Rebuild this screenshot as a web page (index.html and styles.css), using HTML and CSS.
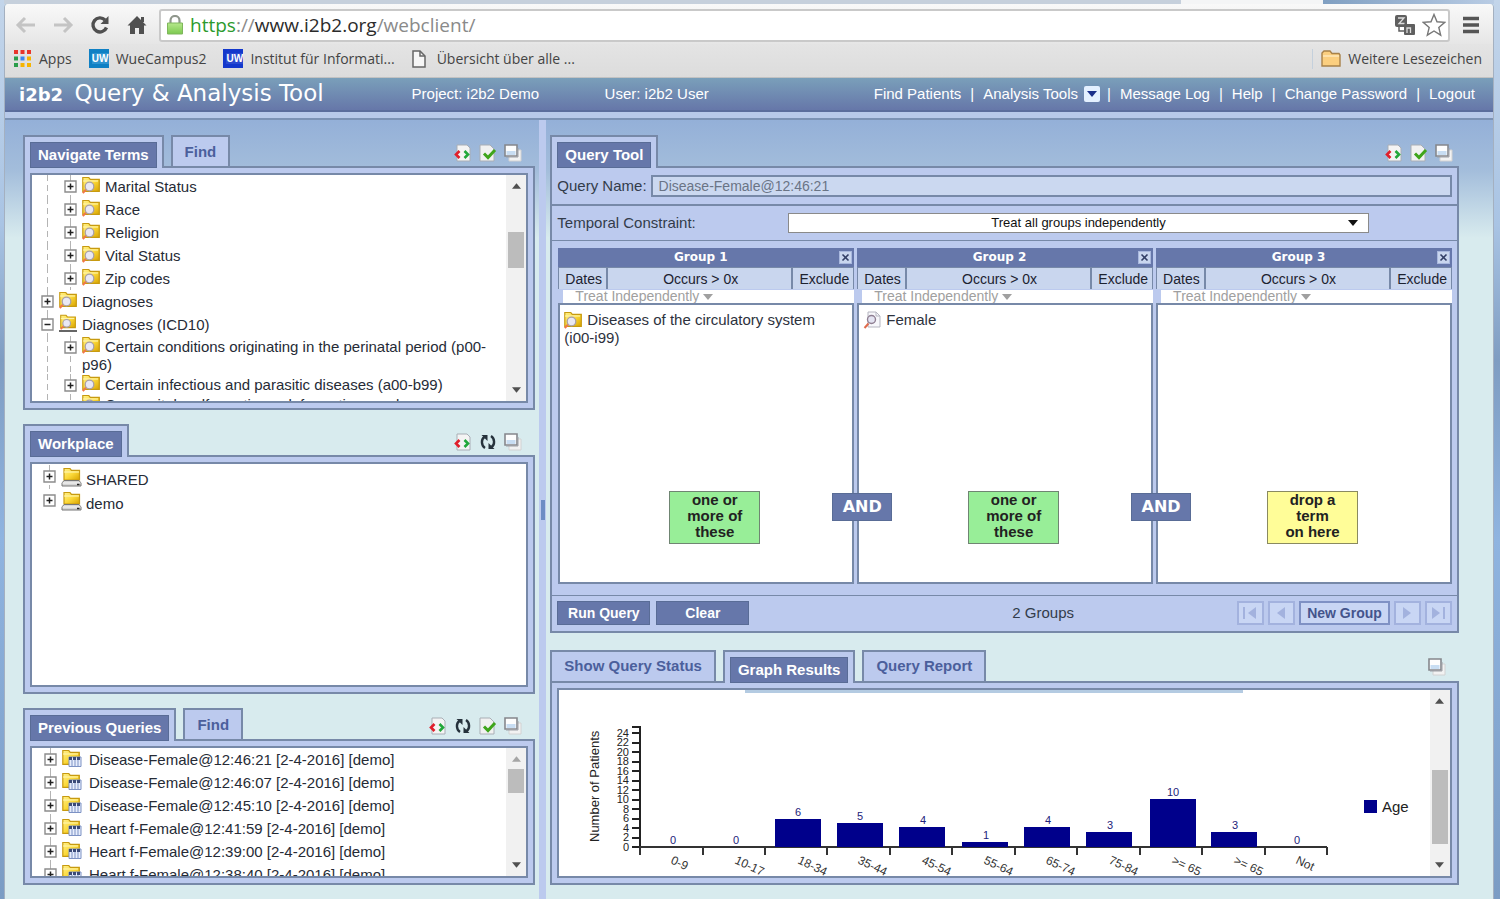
FILE: index.html
```html
<!doctype html>
<html lang="en">
<head>
	<meta charset="UTF-8">
	<meta name="viewport" content="width=device-width, initial-scale=1">
	<title>i2b2 Query &amp; Analysis Tool</title>
	<link rel="stylesheet" href="styles.css">
</head>
<body>

	<!-- shared icons -->
	<svg class="defs" width="0" height="0" aria-hidden="true">
		<defs>
			<linearGradient id="gold" x1="0" y1="0" x2="1" y2="1">
				<stop offset="0" stop-color="#fff08a"/>
				<stop offset="0.5" stop-color="#fbd93a"/>
				<stop offset="1" stop-color="#d9a400"/>
			</linearGradient>
			<linearGradient id="lockfill" x1="0" y1="0" x2="0" y2="1">
				<stop offset="0" stop-color="#b6e88c"/>
				<stop offset="1" stop-color="#7cc94f"/>
			</linearGradient>
		</defs>
		<symbol id="plus" viewBox="0 0 13 13">
			<path d="M1 1h11v11H1z" fill="#fff" stroke="#8c8c8c" stroke-width="1.4"/>
			<path d="M3.5 6.5h6M6.5 3.5v6" stroke="#222" stroke-width="1.5"/>
		</symbol>
		<symbol id="minus" viewBox="0 0 13 13">
			<path d="M1 1h11v11H1z" fill="#fff" stroke="#8c8c8c" stroke-width="1.4"/>
			<path d="M3.5 6.5h6" stroke="#222" stroke-width="1.5"/>
		</symbol>
		<symbol id="folder" viewBox="0 0 18 18">
			<path d="M.8 1.5h6l1.5 1.8h9v12H.8z" fill="url(#gold)" stroke="#c79a10" stroke-width="1.2"/>
			<path d="M1 5h15" stroke="#fff7b8"/>
			<path d="M4 13.5L.8 17.2" stroke="#f0784a" stroke-width="2"/>
			<circle cx="7.5" cy="10.5" r="4.3" fill="#e9e8f4" stroke="#a9a0a8" stroke-width="1.3"/>
		</symbol>
		<symbol id="query" viewBox="0 0 20 18">
			<path d="M.8 1.5h6l1.5 1.8h9v12H.8z" fill="url(#gold)" stroke="#c79a10" stroke-width="1.2"/>
			<path d="M1 5h15" stroke="#fff7b8"/>
			<path d="M7 8h12v9.5H7z" fill="#e8eefc" stroke="#7d92c4"/>
			<path d="M7 9.5h12" stroke="#3a4a78" stroke-width="3" stroke-dasharray="3 1"/>
			<path d="M10 11v6M13 11v6M16 11v6" stroke="#7d92c4"/>
		</symbol>
		<symbol id="drive" viewBox="0 0 21 20">
			<path d="M3 1.5h6l1.500 1.800h8V13H3z" fill="url(#gold)" stroke="#c79a10" stroke-width="1.2"/>
			<path d="M3 5h15" stroke="#fff7b8"/>
			<path d="M3 13.5h15l2 2.5v3H1v-3z" fill="#d5d5d5" stroke="#777"/>
			<path d="M1.5 16h18" stroke="#fafafa"/>
			<path d="M16 17.5h2.5" stroke="#222" stroke-width="1.5"/>
		</symbol>
		<symbol id="sheet" viewBox="0 0 18 18">
			<path d="M5 1h8l4 4v11H5z" fill="#f7f7fb" stroke="#b5b5c0"/>
			<path d="M13 1v4h4" fill="none" stroke="#b5b5c0"/>
			<path d="M5.5 12.5L1.5 17" stroke="#e06b4c" stroke-width="2"/>
			<circle cx="8.5" cy="8.5" r="4" fill="#e4e4f2" stroke="#8f7f92" stroke-width="1.4"/>
		</symbol>
		<symbol id="xml" viewBox="0 0 18 18">
			<path d="M3 1h10l3 3v13H3z" fill="#f4f4f4" stroke="#a9aeb5"/>
			<path d="M5.500 7L2 10.500 5.500 14" fill="none" stroke="#e01f2b" stroke-width="2.6"/>
			<path d="M10.500 7L14 10.500l-3.500 3.500" fill="none" stroke="#22a83a" stroke-width="2.6"/>
		</symbol>
		<symbol id="check" viewBox="0 0 18 18">
			<path d="M1 1h10l4 4v12H1z" fill="#f1f1f1" stroke="#a9aeb5"/>
			<path d="M5 9.500l4 4 7-7.500" fill="none" stroke="#3fa51b" stroke-width="3"/>
		</symbol>
		<symbol id="windows" viewBox="0 0 18 18">
			<path d="M5 6h12v11H5z" fill="#f2f2f2" stroke="#d2d2d2"/>
			<path d="M1 1h12v11H1z" fill="#fdfdfd" stroke="#85878c" stroke-width="1.6"/>
			<path d="M2.5 7h9v4h-9z" fill="#c8ddf2"/>
			<path d="M2 13h12V4" fill="none" stroke="#9d9fa5"/>
		</symbol>
		<symbol id="refresh" viewBox="0 0 18 18">
			<path d="M6 15C2 12.500 2 6 5.500 4" fill="none" stroke="#26323c" stroke-width="2.4"/>
			<path d="M2.500 2H8.500v6z" fill="#26323c"/>
			<path d="M12 3c4 2.500 4 9 .5 11" fill="none" stroke="#26323c" stroke-width="2.4"/>
			<path d="M15.500 16h-6v-6z" fill="#26323c"/>
		</symbol>
		<symbol id="up" viewBox="0 0 10 6"><path d="M0 6h10L5 0z" fill="currentColor"/></symbol>
		<symbol id="down" viewBox="0 0 10 6"><path d="M0 0h10L5 6z" fill="currentColor"/></symbol>
	</svg>

	<!-- browser window -->
	<div class="tabstrip"><div class="opentab"></div></div>
	<div class="window">

		<div class="toolbar">
			<button class="tool off" aria-label="Back"><svg width="22" height="20" viewBox="0 0 22 20"><path d="M20 10H3M10 3l-7 7 7 7" fill="none" stroke="#c4c4c4" stroke-width="3"/></svg></button>
			<button class="tool off" aria-label="Forward"><svg width="22" height="20" viewBox="0 0 22 20"><path d="M2 10h17M12 3l7 7-7 7" fill="none" stroke="#c4c4c4" stroke-width="3"/></svg></button>
			<button class="tool" aria-label="Reload"><svg width="22" height="20" viewBox="0 0 22 20"><path d="M17.5 12.5A7 7 0 1 1 16 5" fill="none" stroke="#505050" stroke-width="3.4"/><path d="M19.5 1v8h-8z" fill="#505050"/></svg></button>
			<button class="tool" aria-label="Home"><svg width="22" height="20" viewBox="0 0 22 20"><path d="M11 1l9.500 9.500H18V19h-5v-6H9v6H4v-8.500H1.500z" fill="#505050"/><path d="M15 2h3v5h-3z" fill="#505050"/></svg></button>
			<div class="address">
				<svg width="16" height="20" viewBox="0 0 16 20"><path d="M3.5 9V5.500a4.500 4.500 0 0 1 9 0V9" fill="none" stroke="#8f968c" stroke-width="2.2"/><path d="M.5 8h15v11H.5z" fill="url(#lockfill)" stroke="#7fb65c"/></svg>
				<span class="url"><i class="scheme">https</i><i class="dim">://</i>www.i2b2.org<i class="dim">/webclient/</i></span>
				<svg class="translate" width="20" height="20" viewBox="0 0 20 20"><rect width="12" height="12" rx="2" fill="#5f5f5f"/><path d="M3 3h6L4 8.500h5.500" fill="none" stroke="#ddd" stroke-width="1.3"/><path d="M4 12v4h5" fill="none" stroke="#5f5f5f" stroke-width="1.5"/><rect x="9" y="9" width="11" height="11" rx="1" fill="#5f5f5f"/><path d="M12 18v-5h3.500v5" fill="none" stroke="#ddd" stroke-width="1.3"/></svg>
				<svg width="24" height="24" viewBox="0 0 24 24"><path d="M12 1.500l3 7.300 7.800.6-6 5 1.900 7.800-6.700-4.200-6.700 4.200 1.900-7.800-6-5 7.800-.6z" fill="#fff" stroke="#777" stroke-width="1.4"/></svg>
			</div>
			<button class="tool" aria-label="Menu"><svg width="16" height="18" viewBox="0 0 16 18"><path d="M0 2.500h16M0 9h16M0 15.500h16" stroke="#555" stroke-width="3.4"/></svg></button>
		</div>

		<div class="bookmarks">
			<a href="#"><svg width="18" height="18" viewBox="0 0 18 18"><path d="M0 2h17" stroke="#e8352b" stroke-width="4" stroke-dasharray="4 2.5"/><path d="M0 8.500h4" stroke="#2a9d4a" stroke-width="4"/><path d="M6.500 8.500h4" stroke="#3a86f0" stroke-width="4"/><path d="M13 8.500h4" stroke="#f6b400" stroke-width="4"/><path d="M0 15h4" stroke="#2a9d4a" stroke-width="4"/><path d="M6.500 15H17" stroke="#f6b400" stroke-width="4" stroke-dasharray="4 2.5"/></svg><span>Apps</span></a>
			<a href="#"><span class="uni">UW</span><span>WueCampus2</span></a>
			<a href="#"><span class="uni dark">UW</span><span>Institut für Informati...</span></a>
			<a href="#"><svg width="14" height="18" viewBox="0 0 14 18"><path d="M1 1h7l5 5v11H1z" fill="#f6f6f6" stroke="#666" stroke-width="1.5"/><path d="M8 1v5h5" fill="none" stroke="#666" stroke-width="1.5"/></svg><span class="wide">Übersicht über alle ...</span></a>
			<a href="#" class="more"><svg width="20" height="18" viewBox="0 0 20 18"><path d="M1 16V3l2-2h6l2 2.500h7l1 1.500v11z" fill="#fbcf7f" stroke="#a8824a" stroke-width="1.4"/><path d="M2 6h16" stroke="#ffe8ba" stroke-width="1.5"/></svg><span>Weitere Lesezeichen</span></a>
		</div>

		<!-- application header -->
		<header class="topbar">
			<h1><b>i2b2</b> Query &amp; Analysis Tool</h1>
			<span class="project">Project: i2b2 Demo</span>
			<span class="user">User: i2b2 User</span>
			<nav>
				<a href="#">Find Patients</a><i>|</i>
				<a href="#">Analysis Tools</a><button class="drop" aria-label="Open analysis tools"><svg width="10" height="6"><use href="#down"/></svg></button><i>|</i>
				<a href="#">Message Log</a><i>|</i>
				<a href="#">Help</a><i>|</i>
				<a href="#">Change Password</a><i>|</i>
				<a href="#">Logout</a>
			</nav>
		</header>
		<div class="stripe"></div>

		<main>
			<!-- left side -->
			<div class="column">

				<section class="panel terms">
					<div class="tabs">
						<button class="tab active"><span>Navigate Terms</span></button>
						<button class="tab"><span>Find</span></button>
						<div class="icons">
							<svg><use href="#xml"/></svg><svg><use href="#check"/></svg><svg><use href="#windows"/></svg>
						</div>
					</div>
					<div class="frame">
						<div class="box">
							<ul class="tree">
								<li><i class="cell line"></i><i class="cell line"><svg><use href="#plus"/></svg></i><span><svg><use href="#folder"/></svg>Marital Status</span></li>
								<li><i class="cell line"></i><i class="cell line"><svg><use href="#plus"/></svg></i><span><svg><use href="#folder"/></svg>Race</span></li>
								<li><i class="cell line"></i><i class="cell line"><svg><use href="#plus"/></svg></i><span><svg><use href="#folder"/></svg>Religion</span></li>
								<li><i class="cell line"></i><i class="cell line"><svg><use href="#plus"/></svg></i><span><svg><use href="#folder"/></svg>Vital Status</span></li>
								<li><i class="cell line"></i><i class="cell line"><svg><use href="#plus"/></svg></i><span><svg><use href="#folder"/></svg>Zip codes</span></li>
								<li><i class="cell line"><svg><use href="#plus"/></svg></i><span><svg><use href="#folder"/></svg>Diagnoses</span></li>
								<li><i class="cell line"><svg><use href="#minus"/></svg></i><span><svg class="open"><use href="#folder"/></svg>Diagnoses (ICD10)</span></li>
								<li class="long"><i class="cell line"></i><i class="cell line"><svg><use href="#plus"/></svg></i><span><svg><use href="#folder"/></svg>Certain conditions originating in the perinatal period (p00-p96)</span></li>
								<li class="long"><i class="cell line"></i><i class="cell line"><svg><use href="#plus"/></svg></i><span><svg><use href="#folder"/></svg>Certain infectious and parasitic diseases (a00-b99)</span></li>
								<li class="long"><i class="cell line"></i><i class="cell line"></i><span><svg><use href="#folder"/></svg>Congenital malformations, deformations and</span></li>
							</ul>
							<div class="scroll"><svg><use href="#up"/></svg><i class="thumb"></i><svg><use href="#down"/></svg></div>
						</div>
					</div>
				</section>

				<section class="panel work">
					<div class="tabs">
						<button class="tab active"><span>Workplace</span></button>
						<div class="icons">
							<svg><use href="#xml"/></svg><svg><use href="#refresh"/></svg><svg><use href="#windows"/></svg>
						</div>
					</div>
					<div class="frame">
						<div class="box">
							<ul class="tree">
								<li><i class="cell line"><svg><use href="#plus"/></svg></i><span><svg><use href="#drive"/></svg>SHARED</span></li>
								<li><i class="cell"><svg><use href="#plus"/></svg></i><span><svg><use href="#drive"/></svg>demo</span></li>
							</ul>
						</div>
					</div>
				</section>

				<section class="panel previous">
					<div class="tabs">
						<button class="tab active"><span>Previous Queries</span></button>
						<button class="tab"><span>Find</span></button>
						<div class="icons">
							<svg><use href="#xml"/></svg><svg><use href="#refresh"/></svg><svg><use href="#check"/></svg><svg><use href="#windows"/></svg>
						</div>
					</div>
					<div class="frame">
						<div class="box">
							<ul class="tree">
								<li><i class="cell line"><svg><use href="#plus"/></svg></i><span><svg><use href="#query"/></svg>Disease-Female@12:46:21 [2-4-2016] [demo]</span></li>
								<li><i class="cell line"><svg><use href="#plus"/></svg></i><span><svg><use href="#query"/></svg>Disease-Female@12:46:07 [2-4-2016] [demo]</span></li>
								<li><i class="cell line"><svg><use href="#plus"/></svg></i><span><svg><use href="#query"/></svg>Disease-Female@12:45:10 [2-4-2016] [demo]</span></li>
								<li><i class="cell line"><svg><use href="#plus"/></svg></i><span><svg><use href="#query"/></svg>Heart f-Female@12:41:59 [2-4-2016] [demo]</span></li>
								<li><i class="cell line"><svg><use href="#plus"/></svg></i><span><svg><use href="#query"/></svg>Heart f-Female@12:39:00 [2-4-2016] [demo]</span></li>
								<li><i class="cell line"><svg><use href="#plus"/></svg></i><span><svg><use href="#query"/></svg>Heart f-Female@12:38:40 [2-4-2016] [demo]</span></li>
							</ul>
							<div class="scroll top"><svg><use href="#up"/></svg><i class="thumb"></i><svg><use href="#down"/></svg></div>
						</div>
					</div>
				</section>
			</div>

			<div class="splitter"><i></i></div>

			<!-- right side -->
			<div class="column right">

				<section class="panel tool-panel">
					<div class="tabs">
						<button class="tab active"><span>Query Tool</span></button>
						<div class="icons">
							<svg><use href="#xml"/></svg><svg><use href="#check"/></svg><svg><use href="#windows"/></svg>
						</div>
					</div>
					<div class="frame">
						<div class="row name">
							<label for="qname">Query Name:</label>
							<input id="qname" type="text" value="Disease-Female@12:46:21">
						</div>
						<div class="row temporal">
							<label for="timing">Temporal Constraint:</label>
							<div class="pick">
								<select id="timing"><option>Treat all groups independently</option></select>
								<svg width="10" height="6"><use href="#down"/></svg>
							</div>
						</div>
						<div class="groups">
							<div class="group">
								<div class="title">Group 1<button aria-label="Close group 1"><svg width="11" height="11" viewBox="0 0 11 11"><path d="M2.5 2.5l6 6M8.500 2.500l-6 6" stroke="#333f66" stroke-width="1.6"/></svg></button></div>
								<div class="options"><button>Dates</button><button class="occurs">Occurs &gt; 0x</button><button>Exclude</button></div>
								<div class="treat">Treat Independently <svg width="10" height="6"><use href="#down"/></svg></div>
								<div class="content">
									<p><svg><use href="#folder"/></svg>Diseases of the circulatory system (i00-i99)</p>
									<div class="hint">one or<br>more of<br>these</div>
								</div>
								<span class="and">AND</span>
							</div>
							<div class="group">
								<div class="title">Group 2<button aria-label="Close group 2"><svg width="11" height="11" viewBox="0 0 11 11"><path d="M2.5 2.5l6 6M8.500 2.500l-6 6" stroke="#333f66" stroke-width="1.6"/></svg></button></div>
								<div class="options"><button>Dates</button><button class="occurs">Occurs &gt; 0x</button><button>Exclude</button></div>
								<div class="treat">Treat Independently <svg width="10" height="6"><use href="#down"/></svg></div>
								<div class="content">
									<p><svg><use href="#sheet"/></svg>Female</p>
									<div class="hint">one or<br>more of<br>these</div>
								</div>
								<span class="and">AND</span>
							</div>
							<div class="group">
								<div class="title">Group 3<button aria-label="Close group 3"><svg width="11" height="11" viewBox="0 0 11 11"><path d="M2.5 2.5l6 6M8.500 2.500l-6 6" stroke="#333f66" stroke-width="1.6"/></svg></button></div>
								<div class="options"><button>Dates</button><button class="occurs">Occurs &gt; 0x</button><button>Exclude</button></div>
								<div class="treat">Treat Independently <svg width="10" height="6"><use href="#down"/></svg></div>
								<div class="content">
									<div class="hint empty">drop a<br>term<br>on here</div>
								</div>
							</div>
						</div>
						<div class="row actions">
							<button class="main">Run Query</button>
							<button class="main">Clear</button>
							<span class="count">2 Groups</span>
							<button class="step" aria-label="First"><svg width="16" height="14" viewBox="0 0 16 14"><path d="M2 1v12" stroke="#a3b2de" stroke-width="2"/><path d="M14 1v12L6 7z" fill="#a3b2de"/></svg></button>
							<button class="step" aria-label="Previous"><svg width="16" height="14" viewBox="0 0 16 14"><path d="M12 1v12L4 7z" fill="#a3b2de"/></svg></button>
							<button class="step new">New Group</button>
							<button class="step" aria-label="Next"><svg width="16" height="14" viewBox="0 0 16 14"><path d="M4 1v12l8-6z" fill="#a3b2de"/></svg></button>
							<button class="step" aria-label="Last"><svg width="16" height="14" viewBox="0 0 16 14"><path d="M14 1v12" stroke="#a3b2de" stroke-width="2"/><path d="M2 1v12l8-6z" fill="#a3b2de"/></svg></button>
						</div>
					</div>
				</section>

				<section class="panel results">
					<div class="tabs">
						<button class="tab"><span>Show Query Status</span></button>
						<button class="tab active"><span>Graph Results</span></button>
						<button class="tab"><span>Query Report</span></button>
						<div class="icons"><svg><use href="#windows"/></svg></div>
					</div>
					<div class="frame">
						<div class="box">
							<div class="chart">
								<!-- patients per age group -->
								<svg width="860" height="186" viewBox="0 0 860 186">
									<path d="M186 0h498v3H186z" fill="#b4cbe2"/>
									<text class="axis" transform="translate(40 152) rotate(-90)">Number of Patients</text>
									<g class="ticks" text-anchor="end">
										<text x="70" y="161">0</text><text x="70" y="151">2</text><text x="70" y="142">4</text><text x="70" y="132">6</text><text x="70" y="123">8</text><text x="70" y="113">10</text><text x="70" y="104">12</text><text x="70" y="94">14</text><text x="70" y="85">16</text><text x="70" y="75">18</text><text x="70" y="66">20</text><text x="70" y="56">22</text><text x="70" y="47">24</text>
									</g>
									<path d="M73 37h8v120M73 43h8M73 53h8M73 62h8M73 72h8M73 81h8M73 91h8M73 100h8M73 110h8M73 119h8M73 129h8M73 138h8M73 148h8M73 157h8" fill="none" stroke="#222" stroke-width="2"/>
									<path d="M80 157h688" stroke="#333" stroke-width="2"/>
									<path d="M81 157v8M144 157v8M206 157v8M268 157v8M331 157v8M393 157v8M456 157v8M518 157v8M581 157v8M643 157v8M706 157v8M768 157v8" stroke="#333" stroke-width="2"/>
									<path d="M216 129h46v28h-46zM278 133h46v24h-46zM340 137h46v20h-46zM403 152h46v5h-46zM465 137h46v20h-46zM527 142h46v15h-46zM591 109h46v48h-46zM652 142h46v15h-46z" fill="#00008b"/>
									<g class="values" text-anchor="middle">
										<text x="114" y="154">0</text><text x="177" y="154">0</text><text x="239" y="126">6</text><text x="301" y="130">5</text><text x="364" y="134">4</text><text x="427" y="149">1</text><text x="489" y="134">4</text><text x="551" y="139">3</text><text x="614" y="106">10</text><text x="676" y="139">3</text><text x="738" y="154">0</text>
									</g>
									<g class="ages">
										<text transform="translate(111 173) rotate(25)">0-9</text><text transform="translate(175 173) rotate(25)">10-17</text><text transform="translate(238 173) rotate(25)">18-34</text><text transform="translate(298 173) rotate(25)">35-44</text><text transform="translate(362 173) rotate(25)">45-54</text><text transform="translate(424 173) rotate(25)">55-64</text><text transform="translate(486 173) rotate(25)">65-74</text><text transform="translate(549 173) rotate(25)">75-84</text><text transform="translate(612 173) rotate(25)">&gt;= 65</text><text transform="translate(674 173) rotate(25)">&gt;= 65</text><text transform="translate(736 173) rotate(25)">Not</text>
									</g>
									<path d="M805 110h13v13h-13z" fill="#00008b"/>
									<text class="legend" x="823" y="122">Age</text>
								</svg>
							</div>
							<div class="scroll low"><svg><use href="#up"/></svg><i class="thumb"></i><svg><use href="#down"/></svg></div>
						</div>
					</div>
				</section>
			</div>
		</main>
	</div>

</body>
</html>
```
FILE: styles.css
```css
* {
	box-sizing: border-box;
}

body {
	display: flex;
	flex-direction: column;
	height: 100vh;
	margin: 0;
	padding: 0 6px 0 4px;
	overflow: hidden;
	background: linear-gradient(#c3d5ea, #a9c4e4 25%, #7f9dc2 40%, #8fb4e0 60%, #7b9cc4);
	color: #333c4a;
	font: 15px/18px "Liberation Sans", Arial, sans-serif;
}

button, input, select {
	margin: 0;
	padding: 0;
	border: 0;
	border-radius: 0;
	color: inherit;
	font: inherit;
}

a {
	color: inherit;
	text-decoration: none;
}

i {
	font-style: normal;
}

.defs {
	position: absolute;
}

svg {
	display: block;
	flex: none;
}

/* browser window */
.tabstrip {
	height: 4px;
	padding-left: 79%;
	background: linear-gradient(90deg, #c6d0dc 88%, #7d9dc0 88%, #b9cce4);
}

.opentab {
	width: 142px;
	height: 4px;
	background: #f4f5f6;
}

.window {
	display: flex;
	flex: 1;
	flex-direction: column;
	min-height: 0;
	border: solid #a4b0c0;
	border-width: 0 1px;
	border-radius: 4px 4px 0 0;
	background: #d8ebee;
	overflow: hidden;
}

.toolbar {
	display: flex;
	align-items: center;
	gap: 15px;
	height: 40px;
	padding: 2px 14px 0 10px;
	background: linear-gradient(#f9f9f9, #e6e6e6);
}

.tool {
	background: none;
}

.address {
	display: flex;
	flex: 1;
	align-items: center;
	gap: 7px;
	height: 33px;
	margin: 0 -2px 0 -4px;
	padding: 0 2px 0 6px;
	border: 2px solid #c9c9c9;
	border-radius: 3px;
	background: #fff;
}

.url {
	color: #2b2b2b;
	font: 19px/26px "Open Sans", sans-serif;
}

.url .scheme {
	color: #2c9a2c;
}

.url .dim {
	color: #8a8a8a;
}

.translate {
	margin-left: auto;
}

.bookmarks {
	display: flex;
	align-items: center;
	gap: 17px;
	height: 34px;
	padding: 0 11px 4px 9px;
	border-bottom: 1px solid #c2c2c2;
	background: linear-gradient(#e4e4e4, #dcdcdc);
	color: #444;
	font: 14px/20px "Open Sans", sans-serif;
}

.bookmarks a {
	display: flex;
	align-items: center;
	gap: 7px;
}

.bookmarks .more {
	margin-left: auto;
	padding-left: 8px;
	border-left: 1px solid #c4d0dc;
}

.bookmarks .wide {
	padding-left: 4px;
}

.uni {
	width: 20px;
	height: 19px;
	border: solid #0f80c4;
	border-width: 4px 0 4px 3px;
	background: #2e93d0;
	color: #fff;
	font: bold 10px/11px "Liberation Sans", sans-serif;
	text-align: center;
}

.uni.dark {
	border-color: #1338cc;
	background: #2a4ad0;
}

/* application header */
.topbar {
	display: flex;
	flex: none;
	align-items: center;
	height: 34px;
	padding: 0 18px 0 14px;
	border-bottom: 2px solid #5a6d9c;
	background: linear-gradient(#7a9fba, #6677a9);
	color: #fff;
}

.topbar h1 {
	width: 26%;
	margin: 0;
	font: 23px/28px "DejaVu Sans", Verdana, sans-serif;
	white-space: nowrap;
}

.topbar h1 b {
	margin-right: 4px;
	font-size: 18px;
}

.project {
	width: 193px;
	margin-left: 14px;
}

.topbar nav {
	display: flex;
	align-items: center;
	gap: 9px;
	margin-left: auto;
}

.drop {
	display: flex;
	align-items: center;
	justify-content: center;
	width: 16px;
	height: 16px;
	margin: 0 -2px 0 -3px;
	border-radius: 2px;
	background: #e4f0ff;
	color: #1a2f8a;
}

.stripe {
	flex: none;
	height: 8px;
	border-bottom: 2px solid #7b92b4;
	background: #b7c9e9;
}

main {
	display: grid;
	flex: 1;
	grid-template-columns: 512fr 7px 908fr;
	grid-template-rows: minmax(0, 1fr);
	column-gap: 4px;
	min-height: 0;
	padding: 0 34px 0 18px;
	background: linear-gradient(#94b0d8, #a3bddb 50px, #d8ebee 118px);
}

.column {
	display: flex;
	flex-direction: column;
	gap: 14px;
	min-width: 0;
	padding: 15px 0 14px;
}

.column.right {
	gap: 17px;
}

.splitter {
	display: flex;
	align-items: center;
	background: #bccaee;
}

.splitter i {
	width: 4px;
	height: 20px;
	margin-left: 2px;
	background: #6d8dc4;
}

/* panels */
.panel {
	display: flex;
	flex-direction: column;
	min-height: 0;
}

.terms { flex: 275 1 0; }
.work { flex: 270 1 0; }
.previous { flex: 177 1 0; }
.tool-panel { flex: 497 1 0; }
.results { flex: 235 1 0; }

.tabs {
	display: flex;
	flex: none;
	gap: 7px;
	height: 31px;
}

.tab {
	height: 31px;
	padding: 0 12px;
	border: solid #7789a8;
	border-width: 2px 2px 0;
	background: #bccaee;
	color: #4b5f9c;
	font-weight: bold;
}

.tab.active {
	position: relative;
	height: 33px;
	padding: 5px 5px 0;
	color: #fff;
}

.tab.active span {
	display: block;
	height: 26px;
	padding: 0 7px;
	border: 1px solid #596c96;
	background: #6677aa;
	line-height: 24px;
}

.icons {
	display: flex;
	align-items: center;
	gap: 7px;
	margin-left: auto;
	padding: 4px 13px 0 0;
}

.tool-panel .icons {
	padding-right: 6px;
}

.icons svg {
	width: 18px;
	height: 18px;
}

.frame {
	display: flex;
	flex: 1;
	flex-direction: column;
	min-height: 0;
	padding: 5px;
	border: 2px solid #7789a8;
	background: #bccaee;
}

.box {
	display: flex;
	flex: 1;
	min-height: 0;
	border: 2px solid #7789a8;
	background: #fff;
	overflow: hidden;
}

/* tree */
.tree {
	flex: 1;
	margin: 0;
	padding: 0 0 0 4px;
	color: #262b36;
	list-style: none;
}

.tree li {
	display: flex;
}

.tree li > span {
	padding: 3px 0 2px;
}

.tree span svg {
	display: inline-block;
	width: 18px;
	height: 18px;
	margin: -2px 5px 0 0;
	vertical-align: top;
}

.tree .open {
	border-bottom: 2px solid #666;
}

.tree .long > span {
	padding: 2px 0 0;
}

.cell {
	display: flex;
	flex: none;
	justify-content: center;
	width: 23px;
	padding-top: 5px;
}

.cell.line {
	background: repeating-linear-gradient(#b4b4b4 0 6px, transparent 6px 10px) center / 1px 100% no-repeat;
}

.cell svg {
	width: 13px;
	height: 13px;
}

.work .tree {
	padding: 1px 0 0 6px;
}

.work .tree li > span {
	padding: 6px 0 0;
}

.work .tree span svg {
	width: 21px;
	height: 20px;
	margin: -4px 4px 0 0;
}

.previous .tree {
	padding-left: 7px;
}

.previous .tree span svg {
	width: 20px;
	margin-right: 7px;
}

/* scroll bars */
.scroll {
	display: flex;
	flex: none;
	flex-direction: column;
	align-items: center;
	width: 20px;
	padding: 8px 0;
	background: #f1f1f1;
	color: #505050;
}

.scroll svg {
	width: 9px;
	height: 6px;
}

.thumb {
	width: 16px;
	height: 36px;
	margin: 43px 0 auto;
	background: #bcbcbc;
}

.scroll.top .thumb {
	height: 24px;
	margin-top: 7px;
}

.scroll.top svg:first-child {
	color: #a5a5a5;
}

.scroll.low .thumb {
	height: 74px;
	margin-top: auto;
	margin-bottom: 18px;
}

/* query tool */
.tool-panel .frame {
	padding: 0;
}

.row {
	display: flex;
	flex: none;
	align-items: center;
	padding: 0 5px;
}

.name {
	gap: 4px;
	height: 38px;
	border-bottom: 2px solid #7789a8;
}

.name input {
	flex: 1;
	height: 22px;
	padding: 0 6px;
	border: 2px solid #7789a8;
	background: #cbd8f0;
	color: #6a7486;
	font-size: 14px;
}

.temporal {
	height: 35px;
	border-bottom: 1px solid #7789a8;
}

.pick {
	position: relative;
	width: 65%;
	margin-left: 92px;
}

.pick select {
	display: block;
	width: 100%;
	height: 20px;
	border: 1px solid #8a8a8a;
	background: #fff;
	color: #111;
	font-size: 13px;
	text-align: center;
	text-align-last: center;
	appearance: none;
}

.pick svg {
	position: absolute;
	top: 7px;
	right: 11px;
	color: #111;
	pointer-events: none;
}

.groups {
	display: flex;
	flex: 1;
	gap: 3px;
	min-height: 0;
	padding: 7px 5px 11px 6px;
	border-bottom: 1px solid #7789a8;
}

.group {
	position: relative;
	display: flex;
	flex: 1;
	flex-direction: column;
}

.title {
	display: flex;
	align-items: center;
	justify-content: flex-end;
	height: 19px;
	padding-right: 2px;
	background: #6677aa;
	color: #fff;
	font: bold 12px/19px "DejaVu Sans", Verdana, sans-serif;
}

.title button {
	width: 13px;
	height: 13px;
	margin-left: 38%;
	border: 1px solid #a9b8de;
	background: #c9d6ee;
}

.options {
	display: flex;
	height: 22px;
	border: solid #7789a8;
	border-width: 1px 1px 0;
	background: #c9d6ee;
	color: #1c2230;
}

.options button {
	padding: 0 4px 0 6px;
	background: none;
	font-size: 14px;
}

.options .occurs {
	flex: 1;
	border: solid #7789a8;
	border-width: 0 2px;
}

.treat {
	display: flex;
	align-items: center;
	gap: 4px;
	height: 13px;
	margin: 1px 0 0 5px;
	padding-left: 12px;
	background: #fff;
	color: #a0a0a0;
	font-size: 14px;
	line-height: 13px;
}

.content {
	display: flex;
	flex: 1;
	flex-direction: column;
	min-height: 0;
	padding: 6px 4px 38px;
	border: 2px solid #7789a8;
	background: #fff;
	color: #2d323d;
}

.content p {
	margin: 0;
}

.content p svg {
	display: inline-block;
	width: 18px;
	height: 18px;
	margin-right: 5px;
	vertical-align: top;
}

.hint {
	align-self: center;
	width: 91px;
	height: 53px;
	margin: auto 0 0 17px;
	border: 1px solid #6f8572;
	background: #98ee98;
	color: #222;
	font-weight: bold;
	line-height: 16px;
	text-align: center;
}

.hint.empty {
	border-color: #8a8a60;
	background: #fffd98;
}

.and {
	position: absolute;
	right: -38px;
	bottom: 63px;
	z-index: 1;
	width: 60px;
	border: 1px solid #596c96;
	background: #6677aa;
	color: #fff;
	font: bold 16px/26px "DejaVu Sans", Verdana, sans-serif;
	text-align: center;
}

.actions {
	gap: 4px;
	height: 35px;
}

.main {
	width: 93px;
	height: 24px;
	margin-right: 2px;
	border: 1px solid #596c96;
	background: #6677aa;
	color: #fff;
	font-size: 14px;
	font-weight: bold;
}

.count {
	flex: 1;
	padding-left: 98px;
	text-align: center;
}

.step {
	display: flex;
	align-items: center;
	justify-content: center;
	width: 27px;
	height: 24px;
	border: 2px solid #a3b2de;
	background: #c9d6f4;
}

.step.new {
	width: 91px;
	border-color: #7f91c4;
	color: #44548c;
	font-size: 14px;
	font-weight: bold;
}

/* chart */
.chart {
	flex: 1;
	min-width: 0;
	overflow: hidden;
}

.axis {
	fill: #222;
	font-size: 13px;
}

.ticks {
	fill: #222;
	font-size: 11px;
}

.values {
	fill: #22227a;
	font-size: 11px;
}

.ages {
	fill: #333;
	font-size: 12px;
}

.legend {
	fill: #222;
	font-size: 15px;
}
```
